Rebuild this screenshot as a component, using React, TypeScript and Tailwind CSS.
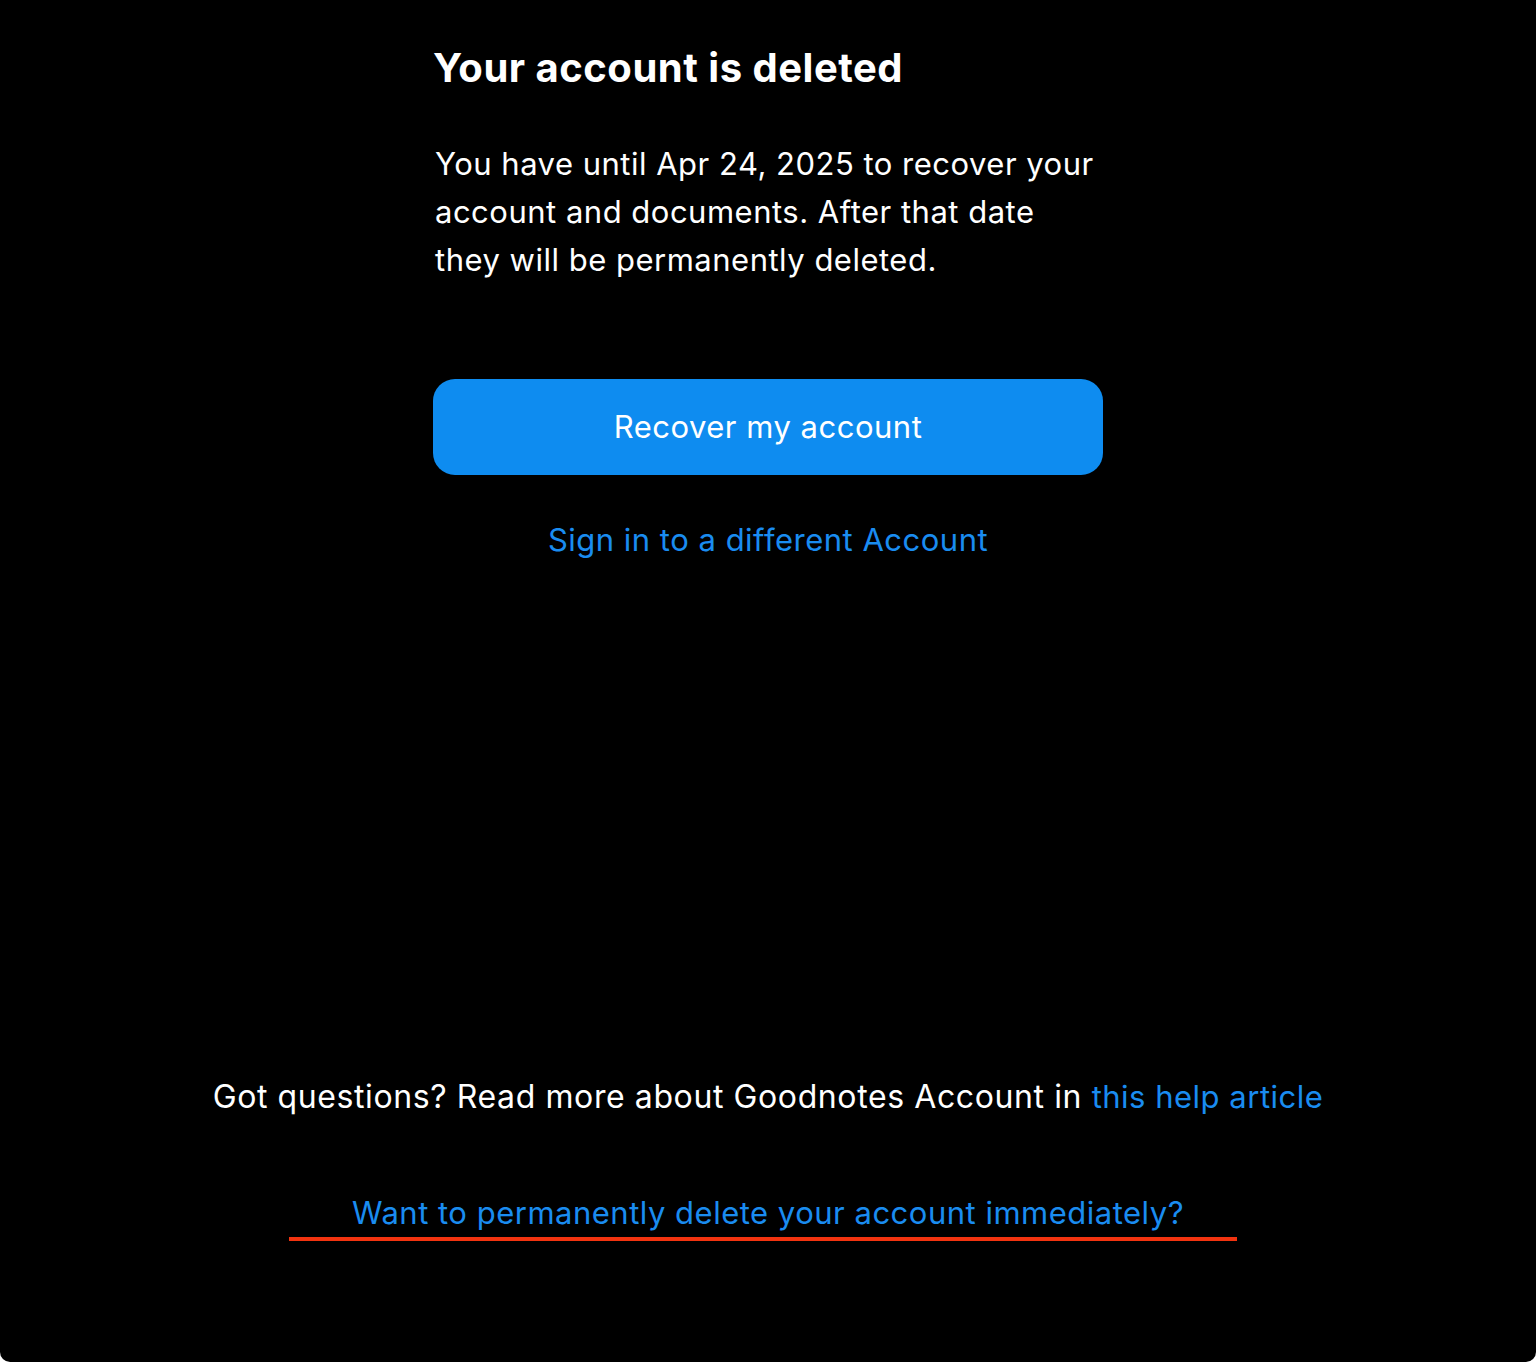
import { memo } from "react";

const sans = "font-['Inter','Liberation_Sans',sans-serif]";

const Footer = memo(() => {
  return (
    <div className="flex flex-col items-center">
      <p className="text-[32px] leading-[40px] text-white tracking-[0.6px] whitespace-nowrap">
        Got questions? Read more about Goodnotes Account in{" "}
        <a className="text-[31px] tracking-[0.5px] text-[#1a8cf0]">this help article</a>
      </p>
      <a className="mt-[76px] text-[31px] leading-[40px] text-[#1a8cf0] tracking-[0.5px]">
        Want to permanently delete your account immediately?
      </a>
      <div className="mt-1 mr-[10px] h-1 w-[948px] bg-[#f2330f]"></div>
    </div>
  );
});

export default function App() {
  return (
    <div className="bg-white">
      <div className={`${sans} h-[1362px] bg-black rounded-b-[10px] flex flex-col`}>
        <div className="mx-auto w-[670px] pt-[44px]">
          <h1 className="text-[40px] leading-[48px] font-bold text-white tracking-[0.5px]">
            Your account is deleted
          </h1>
          <p className="mt-12 pl-[2px] text-[31px] leading-[48px] text-white tracking-[0.5px] whitespace-nowrap">
            You have until Apr 24, 2025 to recover your
            <br />
            account and documents. After that date
            <br />
            they will be permanently deleted.
          </p>
          <button className="mt-[95px] h-[96px] w-full rounded-[22px] bg-[#0e8cf0] text-[31px] text-white tracking-[0.5px]">
            Recover my account
          </button>
          <div className="mt-[45px] text-center text-[31px] leading-[40px] text-[#1a8cf0] tracking-[0.5px]">
            Sign in to a different Account
          </div>
        </div>
        <div className="mt-[517px]">
          <Footer />
        </div>
      </div>
    </div>
  );
}
